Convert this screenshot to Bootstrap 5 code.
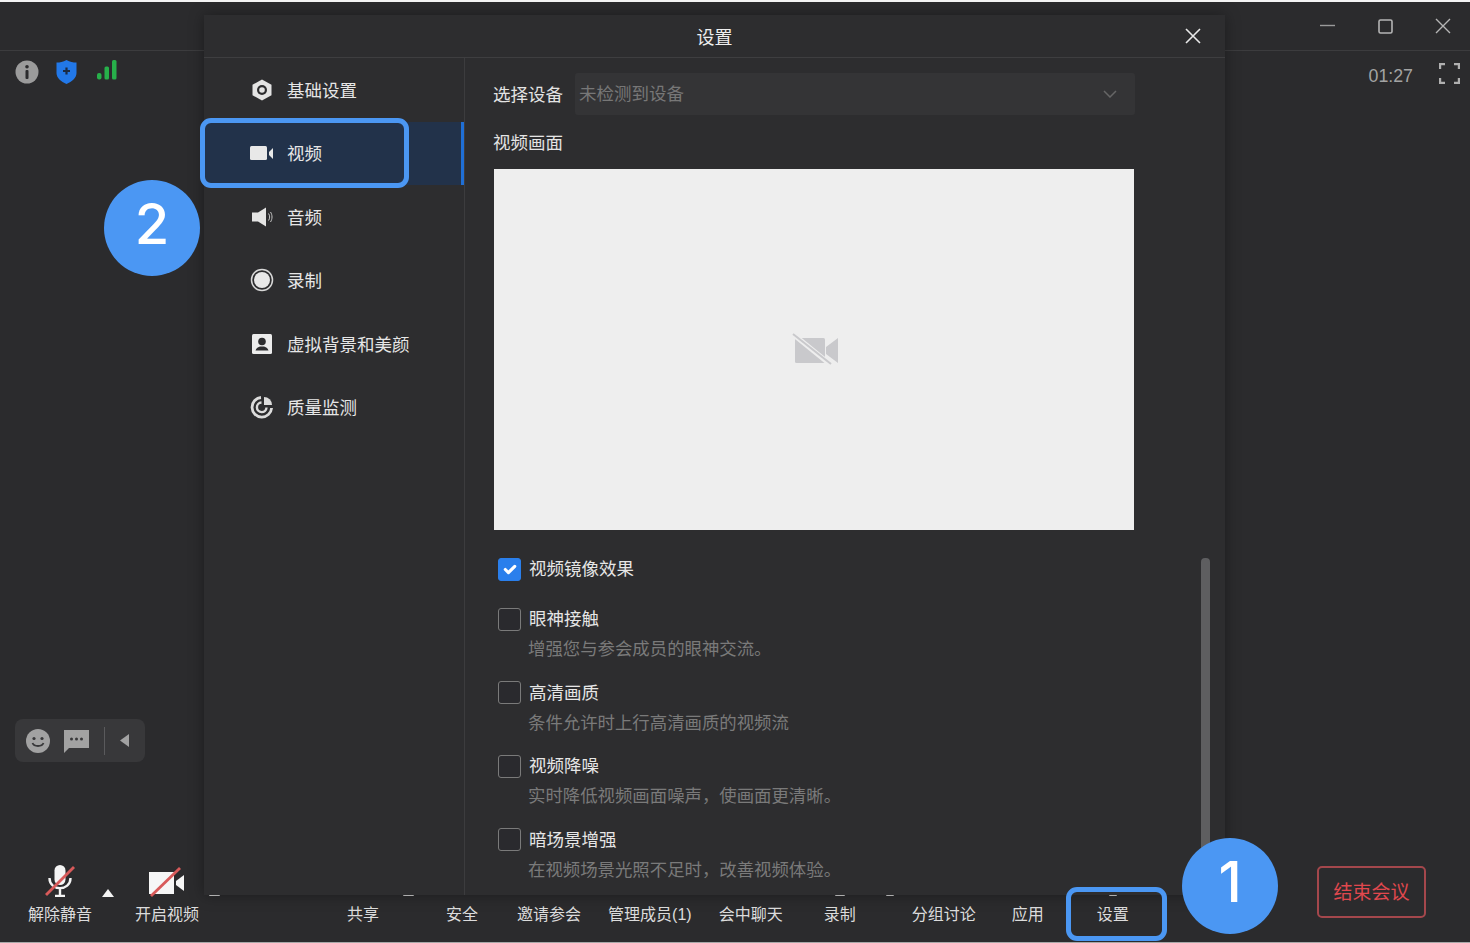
<!DOCTYPE html>
<html lang="zh-CN">
<head>
  <meta charset="UTF-8" />
  <meta name="viewport" content="width=device-width, initial-scale=1" />
  <title>设置</title>
  <link href="https://cdn.jsdelivr.net/npm/bootstrap@5.3.0/dist/css/bootstrap.min.css" rel="stylesheet" />
  <style>
    html, body { height: 100%; overflow: hidden; }
    body {
      background-color: #2b2b2d;
      color: #e4e4e4;
      font-family: "Liberation Sans", "Noto Sans CJK SC", sans-serif;
      border-top: 2px solid #f4f4f4;
      border-bottom: 1px solid #a8a8a8;
      position: relative;
    }
    .meeting { height: 940px; }
    .titlebar { height: 49px; border-bottom: 1px solid #3c3c3e; padding-right: 19px; gap: 42px; }
    .status-row { padding: 9px 10px 0 15px; }
    .status-row .status-icons { gap: 17px; }
    .status-row .signal { margin-left: 3px; margin-top: -4px; }
    .timer { font-size: 17.8px; color: #a3a3a3; margin-right: 26px; margin-top: 3px; }
    .fullscreen { margin-top: 3px; }
    .stage { flex: 1 1 auto; min-height: 0; padding-left: 15px; padding-bottom: 99px; }
    .reaction-pill { width: 130px; height: 43px; background: #38383a; border-radius: 8px; padding-left: 11px; }
    .reaction-pill .bubble { margin-left: 14px; margin-top: 2px; }
    .reaction-pill .divider { width: 1px; height: 28px; background: #5a5a5c; margin: 0 15px; }

    .toolbar { height: 81px; position: relative; font-size: 16px; color: #dcdcdc; padding-left: 28px; }
    .tool { display: flex; flex-direction: column; align-items: center; justify-content: flex-end; height: 64px; line-height: 20px; white-space: nowrap; }
    .tool svg { margin-bottom: 8px; }
    .gap-video { margin-left: 43px; }
    .gap-share { margin-left: 148px; }
    .gap-safe { margin-left: 67px; }
    .gap-invite { margin-left: 39px; }
    .gap-members { margin-left: 27px; }
    .gap-chat { margin-left: 27px; }
    .gap-record { margin-left: 41px; }
    .gap-group { margin-left: 56px; }
    .gap-apps { margin-left: 36px; }
    .gap-settings { margin-left: 53px; }
    .btn-end {
      position: absolute; left: 1317px; top: 5px; width: 109px; height: 52px;
      border: 2px solid #a4474c; border-radius: 5px; color: #e0484e;
      background: transparent; font-size: 19px; padding: 2px 0 0;
    }
    .caret-up { position: absolute; left: 102px; top: 28px; }
    .peek { position: absolute; top: 33px; height: 2px; background: #cfcfcf; border-radius: 1px; }

    .settings-dialog {
      position: absolute; left: 204px; top: 13px; width: 1021px; height: 880px;
      background: #2d2d2f; box-shadow: 0 0 14px rgba(0, 0, 0, .35); z-index: 5;
    }
    .dialog-head { height: 43px; border-bottom: 1px solid #3e3e40; font-size: 18px; position: relative; color: #eee; padding-top: 4px; }
    .dialog-close { position: absolute; right: 24px; top: 13px; line-height: 0; }
    .dialog-body { height: 837px; }
    .side-nav { width: 261px; flex: none; border-right: 1px solid #3c3c3e; }
    .side-nav .nav-link {
      height: 63.5px; padding: 0 0 0 46px; gap: 13px; color: #e6e6e6; font-size: 17.5px;
    }
    .side-nav .nav-link span { padding-top: 2px; }
    .side-nav .nav-link.active { background: #22324a; border-right: 3px solid #1f6fd6; }
    .side-nav .nav-link svg { flex: none; }
    .pane { flex: 1 1 auto; padding: 15px 0 0 28px; overflow: hidden; position: relative; font-size: 17.5px; }
    .pane-label { padding-top: 3px; }
    .device-select {
      width: 560px; height: 42px; background: #343436; border: 0; border-radius: 3px;
      color: #777; font-size: 17.5px; padding: 0 18px 0 4px; margin-left: 12px;
    }
    .preview { width: 640px; height: 361px; background: #eeeeee; margin-left: 1px; padding-left: 4px; }
    .preview-label { line-height: 24px; margin: 16px 0 14px; }
    .opt { padding-left: 5px; margin: 0; min-height: 0; display: flex; gap: 8px; align-items: center; height: 24px; }
    .opt .form-check-input {
      width: 23px; height: 23px; margin: 0; float: none; flex: none; border-radius: 3px;
      background-color: #2a2a2e; border: 1px solid #7a7a7a;
    }
    .opt .form-check-input:checked { background-color: #2a7fec; border-color: #2a7fec; }
    .opt .form-check-label { line-height: 24px; color: #e6e6e6; }
    .opt-mirror { margin-top: 27px; margin-bottom: 26px; }
    .desc { font-size: 17.4px; line-height: 24px; color: #7a7a7a; margin: 6px 0 19.5px 35px; }
    .scroll-thumb { position: absolute; left: 736px; top: 500px; width: 9px; height: 340px; background: #5e5e60; border-radius: 4px 4px 0 0; }

    .callout {
      position: absolute; width: 96px; height: 96px; background: #4b97f3; color: #fff;
      font-family: Inter, "Liberation Sans", sans-serif; font-weight: 500;
      font-size: 56px; line-height: 1; padding-bottom: 8px; z-index: 8;
    }
    .callout-two { left: 104px; top: 178px; }
    .callout-one { left: 1182px; top: 836px; }
    .hl-box { position: absolute; border: 5px solid #4b97f3; border-radius: 11px; z-index: 7; }
    .hl-nav { left: 200px; top: 116px; width: 209px; height: 70px; }
    .hl-settings { left: 1066px; top: 885px; width: 101px; height: 54px; }
  </style>
</head>
<body>

  <div class="meeting d-flex flex-column">
    <div class="titlebar d-flex align-items-center justify-content-end">
      <svg width="16" height="16" viewBox="0 0 16 16"><path d="M0 7.500h15" stroke="#9a9a9a" stroke-width="1.400"/></svg>
      <svg width="15" height="15" viewBox="0 0 15 15"><rect x="1" y="1" width="13" height="13" rx="1.500" fill="none" stroke="#b5b5b5" stroke-width="1.600"/></svg>
      <svg width="16" height="16" viewBox="0 0 16 16"><path d="M1 1l14 14M15 1L1 15" stroke="#b5b5b5" stroke-width="1.400"/></svg>
    </div>

    <div class="status-row d-flex justify-content-between align-items-start">
      <div class="status-icons d-flex align-items-center">
        <svg width="24" height="24" viewBox="0 0 24 24"><circle cx="12" cy="12" r="11.500" fill="#9b9b9b"/><circle cx="12" cy="6.800" r="1.800" fill="#2b2b2d"/><rect x="10.500" y="10" width="3" height="9" rx="1" fill="#2b2b2d"/></svg>
        <svg width="21" height="24" viewBox="0 0 21 24"><path d="M10.500 0C14 2 17 2.500 20.500 2.500V13c0 5-4.500 8.500-10 11C5 21.500.5 18 .5 13V2.500C4 2.500 7 2 10.500 0z" fill="#2278e8"/><path d="M10.500 7.500v7M7 11h7" stroke="#1b2b44" stroke-width="2.200"/></svg>
        <svg class="signal" width="20" height="20" viewBox="0 0 20 20"><rect x="0" y="13" width="4.500" height="6.500" rx="2" fill="#27b04a"/><rect x="7.500" y="6.500" width="4.500" height="13" rx="1.500" fill="#27b04a"/><rect x="15" y="0" width="4.500" height="19.500" rx="1.500" fill="#27b04a"/></svg>
      </div>
      <div class="d-flex align-items-start">
        <span class="timer">01:27</span>
        <svg class="fullscreen" width="21" height="21" viewBox="0 0 21 21"><path d="M1 6V1h5M15 1h5v5M20 15v5h-5M6 20H1v-5" fill="none" stroke="#b0b0b0" stroke-width="2.400"/></svg>
      </div>
    </div>

    <div class="stage d-flex align-items-end">
      <div class="reaction-pill d-flex align-items-center">
        <svg width="24" height="24" viewBox="0 0 24 24"><circle cx="12" cy="12" r="12" fill="#a2a2a2"/><circle cx="8" cy="9.500" r="1.600" fill="#38383a"/><circle cx="16" cy="9.500" r="1.600" fill="#38383a"/><path d="M6.500 14c1.500 4 9.500 4 11 0" fill="none" stroke="#38383a" stroke-width="1.800"/></svg>
        <svg class="bubble" width="25" height="23" viewBox="0 0 25 23"><path d="M0 0h25v18H5l-5 5z" fill="#a2a2a2"/><circle cx="7.500" cy="9" r="1.500" fill="#38383a"/><circle cx="12.500" cy="9" r="1.500" fill="#38383a"/><circle cx="17.500" cy="9" r="1.500" fill="#38383a"/></svg>
        <span class="divider"></span>
        <svg width="10" height="13" viewBox="0 0 10 13"><path d="M9 0v13L0 6.500z" fill="#a2a2a2"/></svg>
      </div>
    </div>

    <div class="toolbar d-flex align-items-start">
      <div class="tool">
        <svg width="32" height="32" viewBox="0 0 32 32">
          <rect x="10.500" y="0" width="11" height="20" rx="5.500" fill="#f4f4f4"/>
          <path d="M5.500 13c0 13.500 21 13.500 21 0M16 23v8M11 31h10" fill="none" stroke="#f4f4f4" stroke-width="2.400"/>
          <path d="M2 30L30 2" stroke="#d85a5a" stroke-width="2.800"/>
        </svg>
        解除静音
      </div>
      <div class="tool gap-video">
        <svg width="36" height="30" viewBox="0 0 36 30">
          <rect x="0" y="5" width="25" height="22" fill="#f6f6f6"/>
          <path d="M27 14l8-6v16l-8-6z" fill="#f6f6f6"/>
          <path d="M2 29L31 1" stroke="#d85a5a" stroke-width="2.800"/>
        </svg>
        开启视频
      </div>
      <div class="tool gap-share">共享</div>
      <div class="tool gap-safe">安全</div>
      <div class="tool gap-invite">邀请参会</div>
      <div class="tool gap-members">管理成员(1)</div>
      <div class="tool gap-chat">会中聊天</div>
      <div class="tool gap-record">录制</div>
      <div class="tool gap-group">分组讨论</div>
      <div class="tool gap-apps">应用</div>
      <div class="tool gap-settings">设置</div>
      <svg class="caret-up" width="12" height="8" viewBox="0 0 12 8"><path d="M6 0l6 8H0z" fill="#f4f4f4"/></svg>
      <span class="peek" style="left:209px;width:11px"></span>
      <span class="peek" style="left:403px;width:11px"></span>
      <span class="peek" style="left:835px;width:10px"></span>
      <span class="peek" style="left:886px;width:8px"></span>
      <span class="peek" style="left:1109px;width:8px"></span>
      <button type="button" class="btn btn-end">结束会议</button>
    </div>
  </div>

  <div class="settings-dialog">
    <div class="dialog-head d-flex align-items-center justify-content-center">
      设置
      <span class="dialog-close">
        <svg width="16" height="16" viewBox="0 0 16 16"><path d="M1 1l14 14M15 1L1 15" stroke="#e8e8e8" stroke-width="1.600"/></svg>
      </span>
    </div>
    <div class="dialog-body d-flex">
      <nav class="side-nav nav flex-column">
        <a class="nav-link d-flex align-items-center" href="#">
          <svg width="24" height="24" viewBox="0 0 24 24"><path d="M12 1.500l9.500 5.200v10.600L12 22.500l-9.500-5.200V6.700z" fill="#e4e4e4"/><circle cx="12" cy="12" r="5" fill="#2d2d2f"/><circle cx="12" cy="12" r="2.800" fill="#e4e4e4"/></svg>
          <span>基础设置</span>
        </a>
        <a class="nav-link active d-flex align-items-center" href="#">
          <svg width="24" height="24" viewBox="0 0 24 24"><rect x="0" y="5" width="17" height="14" rx="1.500" fill="#e8e8e8"/><path d="M19 11l4-4v11l-4-4z" fill="#e8e8e8"/></svg>
          <span>视频</span>
        </a>
        <a class="nav-link d-flex align-items-center" href="#">
          <svg width="24" height="24" viewBox="0 0 24 24"><path d="M2 7.500h6L16 2.500v19l-8-5H2z" fill="#e4e4e4"/><path d="M18.500 8.500c1.500 2 1.500 5 0 7M20.500 7c2 3 2 7 0 10" fill="none" stroke="#c8c8c8" stroke-width="1"/></svg>
          <span>音频</span>
        </a>
        <a class="nav-link d-flex align-items-center" href="#">
          <svg width="24" height="24" viewBox="0 0 24 24"><circle cx="12" cy="12" r="10.500" fill="none" stroke="#d8d8d8" stroke-width="1.500"/><circle cx="12" cy="12" r="8" fill="#e8e8e8"/></svg>
          <span>录制</span>
        </a>
        <a class="nav-link d-flex align-items-center" href="#">
          <svg width="24" height="24" viewBox="0 0 24 24"><rect x="2" y="2" width="20" height="20" rx="1.500" fill="#ececec"/><circle cx="12" cy="9.500" r="3.800" fill="#2d2d2f"/><path d="M5.500 18.500c.5-2.500 3-3.500 4.500-4h4c1.500.5 4 1.500 4.500 4z" fill="#2d2d2f"/></svg>
          <span>虚拟背景和美颜</span>
        </a>
        <a class="nav-link d-flex align-items-center" href="#">
          <svg width="24" height="24" viewBox="0 0 24 24"><path d="M11 2.500A9.800 9.800 0 1 0 21.600 13" fill="none" stroke="#dcdcdc" stroke-width="2.800"/><path d="M11.500 7.500a4.800 4.800 0 1 0 5 5" fill="none" stroke="#dcdcdc" stroke-width="2.400"/><path d="M14 2a8 8 0 0 1 8 8h-8z" fill="#dcdcdc"/></svg>
          <span>质量监测</span>
        </a>
      </nav>

      <div class="pane">
        <div class="d-flex align-items-center">
          <span class="pane-label">选择设备</span>
          <div class="device-select d-flex align-items-center justify-content-between">
            未检测到设备
            <svg width="14" height="8" viewBox="0 0 14 8"><path d="M1 1l6 6 6-6" fill="none" stroke="#666" stroke-width="1.500"/></svg>
          </div>
        </div>
        <div class="preview-label">视频画面</div>
        <div class="preview d-flex align-items-center justify-content-center">
          <svg width="48" height="34" viewBox="0 0 48 34">
            <rect x="3" y="5" width="30" height="25" rx="1.500" fill="#c9c9cc"/>
            <path d="M34 14L46 5v25l-12-9z" fill="#c9c9cc"/>
            <path d="M2 2l37 30" stroke="#eeeeee" stroke-width="5"/>
            <path d="M1 1l38 30" stroke="#c9c9cc" stroke-width="2"/>
          </svg>
        </div>

        <div class="opt opt-mirror form-check">
          <input class="form-check-input" type="checkbox" id="optMirror" checked />
          <label class="form-check-label" for="optMirror">视频镜像效果</label>
        </div>

        <div class="opt form-check">
          <input class="form-check-input" type="checkbox" id="optEye" />
          <label class="form-check-label" for="optEye">眼神接触</label>
        </div>
        <div class="desc">增强您与参会成员的眼神交流。</div>

        <div class="opt form-check">
          <input class="form-check-input" type="checkbox" id="optHd" />
          <label class="form-check-label" for="optHd">高清画质</label>
        </div>
        <div class="desc">条件允许时上行高清画质的视频流</div>

        <div class="opt form-check">
          <input class="form-check-input" type="checkbox" id="optNoise" />
          <label class="form-check-label" for="optNoise">视频降噪</label>
        </div>
        <div class="desc">实时降低视频画面噪声，使画面更清晰。</div>

        <div class="opt form-check">
          <input class="form-check-input" type="checkbox" id="optDark" />
          <label class="form-check-label" for="optDark">暗场景增强</label>
        </div>
        <div class="desc">在视频场景光照不足时，改善视频体验。</div>

        <div class="scroll-thumb"></div>
      </div>
    </div>
  </div>

  <div class="hl-box hl-nav"></div>
  <div class="hl-box hl-settings"></div>
  <div class="callout callout-two rounded-circle d-flex align-items-center justify-content-center">2</div>
  <div class="callout callout-one rounded-circle d-flex align-items-center justify-content-center">1</div>

  <script src="https://cdn.jsdelivr.net/npm/bootstrap@5.3.0/dist/js/bootstrap.bundle.min.js"></script>
</body>
</html>
